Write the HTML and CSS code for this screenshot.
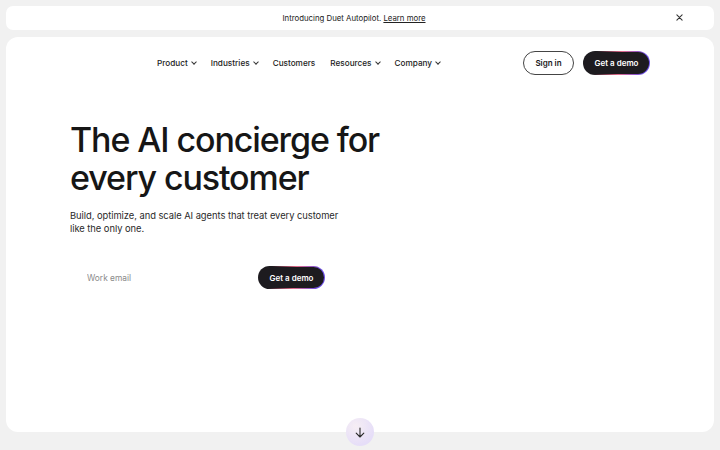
FILE: index.html
```html
<!DOCTYPE html>
<html lang="en">
<head>
    <meta charset="UTF-8">
    <meta name="viewport" content="width=device-width, initial-scale=1.0">
    <title>Duet - The AI concierge for every customer</title>
    <link rel="stylesheet" href="styles.css">
</head>
<body>
    <div class="announce">
        <p>Introducing Duet Autopilot. <a href="#">Learn more</a></p>
        <button class="announce-close" aria-label="Close">
            <svg width="7" height="7" viewBox="0 0 8 8"><path d="M1 1L7 7M7 1L1 7" stroke="#333" stroke-width="1.2" stroke-linecap="round"/></svg>
        </button>
    </div>

    <main class="hero-card">
        <header class="topbar">
            <nav class="nav">
                <a href="#">Product <span class="caret"></span></a>
                <a href="#">Industries <span class="caret"></span></a>
                <a href="#">Customers</a>
                <a href="#">Resources <span class="caret"></span></a>
                <a href="#">Company <span class="caret"></span></a>
            </nav>
            <div class="actions">
                <a href="#" class="btn btn-outline">Sign in</a>
                <a href="#" class="btn btn-dark">Get a demo</a>
            </div>
        </header>

        <section class="hero">
            <h1>The AI concierge for<br>every customer</h1>
            <p class="lead">Build, optimize, and scale AI agents that treat every customer<br>like the only one.</p>
            <form class="signup" onsubmit="return false">
                <input type="email" placeholder="Work email">
                <button class="btn btn-dark">Get a demo</button>
            </form>
        </section>
    </main>

    <a href="#" class="scroll-down" aria-label="Scroll down">
        <svg width="10" height="11" viewBox="0 0 10 11"><path d="M5 1V10M1.2 6.2L5 10L8.8 6.2" fill="none" stroke="#2a2a2a" stroke-width="1.1" stroke-linecap="round" stroke-linejoin="round"/></svg>
    </a>
</body>
</html>
```

FILE: styles.css
```css
* {
    box-sizing: border-box;
}

body {
    margin: 0;
    padding: 6px;
    background: #f1f1f1;
    font-family: Inter, 'Noto Sans', sans-serif;
    color: #161616;
    height: 450px;
    overflow: hidden;
    display: flex;
    flex-direction: column;
    gap: 7px;
}

a {
    color: inherit;
    text-decoration: none;
}

/* announcement strip */
.announce {
    height: 24px;
    background: #fff;
    border-radius: 7px;
    display: flex;
    align-items: center;
    justify-content: center;
    position: relative;
    font-size: 7.8px;
    color: #222;
}

.announce p {
    margin: 0 12px 0 0;
}

.announce a {
    text-decoration: underline;
}

.announce-close {
    position: absolute;
    right: 31px;
    top: 8px;
    border: none;
    background: none;
    padding: 0;
    line-height: 0;
}

/* main card */
.hero-card {
    background: #fff;
    border-radius: 12px;
    height: 395px;
    padding: 14px 64px 0 64px;
}

.topbar {
    display: flex;
    align-items: center;
    justify-content: space-between;
    height: 24px;
}

.nav {
    display: flex;
    gap: 15px;
    margin-left: 87px;
    font-size: 8.2px;
    font-weight: 500;
    color: #1c1c1c;
}

.nav a {
    display: flex;
    align-items: center;
    gap: 4px;
}

.caret {
    width: 4px;
    height: 4px;
    border-right: 1px solid #333;
    border-bottom: 1px solid #333;
    transform: rotate(45deg);
    margin-top: -3px;
}

.actions {
    display: flex;
    gap: 9px;
}

.btn {
    display: inline-flex;
    align-items: center;
    justify-content: center;
    height: 24px;
    border-radius: 12px;
    font-family: inherit;
    font-size: 8px;
    font-weight: 600;
    cursor: pointer;
}

.btn-outline {
    width: 51px;
    border: 1px solid #444;
    color: #1a1a1a;
}

.btn-dark {
    width: 67px;
    color: #fff;
    border: 1px solid transparent;
    background:
        linear-gradient(#1d1b1f, #1d1b1f) padding-box,
        linear-gradient(100deg, #1d1b1f 20%, #e06a8a 55%, #6b4de6 90%) border-box;
}

/* hero copy */
.hero {
    padding-top: 46px;
}

h1 {
    margin: 0;
    font-size: 34px;
    line-height: 38px;
    font-weight: 500;
    letter-spacing: -1.1px;
}

.lead {
    margin: 12px 0 0;
    font-size: 9.4px;
    line-height: 13px;
    letter-spacing: -0.05px;
    color: #2a2a2a;
}

.signup {
    display: flex;
    align-items: center;
    margin-top: 31px;
    width: 255px;
    justify-content: space-between;
}

.signup input {
    border: none;
    outline: none;
    width: 150px;
    margin-left: 15px;
    font-family: inherit;
    font-size: 8.4px;
    color: #222;
    background: none;
}

.signup input::placeholder {
    color: #8a8a8a;
}

.signup .btn {
    height: 23px;
}

/* scroll hint overlapping the card's bottom edge */
.scroll-down {
    position: absolute;
    left: 346px;
    top: 418px;
    width: 28px;
    height: 28px;
    border-radius: 50%;
    background: radial-gradient(circle at 35% 30%, #f6eef4, #e6def8 70%);
    display: flex;
    align-items: center;
    justify-content: center;
}
```
